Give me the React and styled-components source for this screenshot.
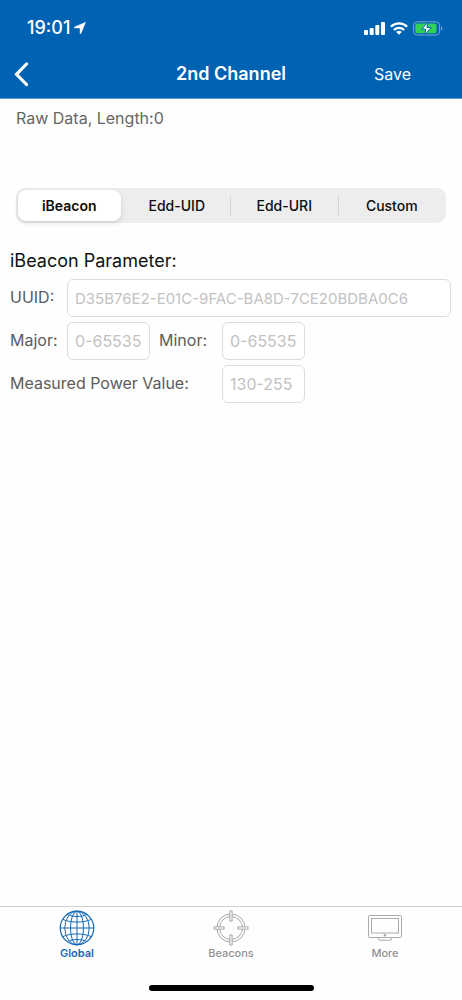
import React, { useState } from "react";
import styled, { createGlobalStyle } from "styled-components";

const GlobalStyle = createGlobalStyle`
  * { box-sizing: border-box; }
  body { margin: 0; background: #fff; font-family: Inter, "Liberation Sans", sans-serif; }
  button, input { font: inherit; }
`;

const Screen = styled.div`
  display: flex;
  flex-direction: column;
  min-height: 100vh;
  background: #fefefe;
`;

const Header = styled.header`
  background: #0062b2;
  color: #fff;
  border-bottom: 1px solid #5c9bd0;
`;

const StatusBar = styled.div`
  display: flex;
  align-items: center;
  justify-content: space-between;
  height: 52px;
  padding: 4px 19px 0 27px;
`;

const Clock = styled.div`
  display: flex;
  align-items: center;
  gap: 4px;
  font-size: 18px;
  line-height: 24px;
  font-weight: 500;
`;

const StatusIcons = styled.div`
  display: flex;
  align-items: center;
  gap: 5px;
`;

const NavBar = styled.div`
  display: grid;
  grid-template-columns: 1fr auto 1fr;
  align-items: center;
  height: 46px;
  padding: 0 14px 2px;
`;

const NavSide = styled.div`
  display: flex;
  justify-content: ${(p) => (p.$end ? "flex-end" : "flex-start")};
  padding-right: ${(p) => (p.$end ? "37px" : "0")};
`;

const Title = styled.h1`
  margin: 0;
  font-size: 18px;
  line-height: 24px;
  font-weight: 600;
`;

const NavButton = styled.button`
  display: flex;
  align-items: center;
  border: 0;
  padding: 0;
  background: none;
  color: inherit;
  font-size: 16px;
  line-height: 24px;
`;

const Main = styled.main`
  flex: 1;
  padding-top: 7px;
`;

const RawData = styled.p`
  margin: 0 16px 58px;
  color: #666;
  font-size: 16px;
  line-height: 24px;
`;

const Segments = styled.fieldset`
  display: flex;
  gap: 5px;
  height: 35px;
  min-width: 0;
  margin: 0 16px;
  padding: 2px 3px 2px 2px;
  border: 0;
  border-radius: 9px;
  background: #ededee;
`;

const Segment = styled.label`
  position: relative;
  display: flex;
  flex: 1;
  align-items: center;
  justify-content: center;
  border-radius: 8px;
  font-size: 14px;
  line-height: 20px;
  font-weight: ${(p) => (p.$active ? 600 : 500)};
  color: #0c0c0c;
  background: ${(p) => (p.$active ? "#fff" : "transparent")};
  box-shadow: ${(p) => (p.$active ? "0 2px 5px rgba(0, 0, 0, 0.14)" : "none")};
  cursor: pointer;

  &::before {
    content: "";
    position: absolute;
    left: -3px;
    top: 6px;
    bottom: 6px;
    width: 1px;
    background: ${(p) => (p.$divider ? "#d2d2d4" : "transparent")};
  }
`;

const HiddenRadio = styled.input`
  position: absolute;
  inset: 0;
  margin: 0;
  opacity: 0;
`;

const Form = styled.form`
  padding: 25px 11px 0 10px;
`;

const SectionTitle = styled.h2`
  margin: 0 0 5px;
  font-size: 18px;
  line-height: 26px;
  font-weight: 400;
  color: #111;
`;

const Fields = styled.div`
  display: grid;
  grid-template-columns: 57px 83px 72px 83px 1fr;
  grid-auto-rows: 38px;
  row-gap: 5px;
`;

const FieldLabel = styled.label`
  grid-column: ${(p) => p.$column};
  align-self: center;
  padding-bottom: 3px;
  padding-left: ${(p) => (p.$inset ? "9px" : "0")};
  font-size: 16px;
  line-height: 24px;
  white-space: nowrap;
  color: #5c5c5c;
`;

const Field = styled.input`
  grid-column: ${(p) => p.$column};
  width: 100%;
  min-width: 0;
  padding: 0 4px 0 7px;
  border: 1px solid #dcdcdc;
  border-radius: 6px;
  background: #fff;
  color: #333;
  font-size: ${(p) => (p.$long ? "15px" : "16px")};
  outline-color: #0062b2;

  &::placeholder { color: #c2c2c2; opacity: 1; }
`;

const TabBar = styled.nav`
  display: flex;
  height: 79px;
  border-top: 1px solid #d0d0d0;
`;

const Tab = styled.a`
  display: flex;
  flex: 1;
  flex-direction: column;
  align-items: center;
  padding-top: 3px;
  font-size: 11px;
  line-height: 14px;
  font-weight: ${(p) => (p.$active ? 600 : 500)};
  color: ${(p) => (p.$active ? "#1668b5" : "#929292")};
  text-decoration: none;
`;

const HomeIndicator = styled.div`
  width: 165px;
  height: 6px;
  margin: 0 auto 9px;
  border-radius: 3px;
  background: #000;
`;

const LocationArrow = () => (
  <svg width="12" height="12" viewBox="0 0 12 12" aria-hidden="true">
    <path d="M11.6.3 6.9 11.6c-.2.5-.9.4-.9-.1V6H.6C0 6-.1 5.300.4 5.100z" fill="#fff" stroke="#fff" strokeWidth=".4" strokeLinejoin="round" />
  </svg>
);

const BackIcon = () => (
  <svg width="15" height="25" viewBox="0 0 15 25" fill="none" aria-hidden="true">
    <path d="M12.5 2 2.5 12.300l10 10.200" stroke="#fff" strokeWidth="3.2" strokeLinecap="round" strokeLinejoin="miter" />
  </svg>
);

const SignalIcon = () => (
  <svg width="21" height="13" viewBox="0 0 21 13" fill="#fff" aria-hidden="true">
    <rect x="0" y="8" width="4" height="5" rx="1" />
    <rect x="5.7" y="6" width="4" height="7" rx="1" />
    <rect x="11.3" y="3" width="4" height="10" rx="1" />
    <rect x="17" y="0" width="4" height="13" rx="1" />
  </svg>
);

const WifiIcon = () => (
  <svg width="18" height="13" viewBox="0 0 18 13" fill="none" stroke="#fff" strokeWidth="2.3" aria-hidden="true">
    <path d="M.9 4.7a11.6 11.6 0 0 1 16.2 0M3.9 8a7.4 7.4 0 0 1 10.2 0" />
    <path d="M9 12.8 6.2 10a4 4 0 0 1 5.6 0z" fill="#fff" stroke="none" />
  </svg>
);

const BatteryIcon = () => (
  <svg width="30" height="15" viewBox="0 0 30 15" aria-hidden="true">
    <rect x=".6" y=".8" width="26" height="13.2" rx="3.8" fill="none" stroke="#78abd5" />
    <rect x="2.3" y="2.5" width="21.2" height="9.8" rx="2.2" fill="#32d158" />
    <path d="M28 5.2c1.8.8 1.8 3.6 0 4.4z" fill="#78abd5" />
    <path d="m15.2.8-6.4 7.4h4.1l-1.4 6 6.7-7.8h-4.3z" fill="#fff" stroke="#0062b2" strokeWidth="1" />
  </svg>
);

const GlobeIcon = () => (
  <svg width="36" height="36" viewBox="0 0 36 36" fill="none" stroke="currentColor" aria-hidden="true">
    <circle cx="18" cy="18" r="16.8" strokeWidth="1.2" />
    <ellipse cx="18" cy="18" rx="12.2" ry="16.8" />
    <ellipse cx="18" cy="18" rx="6.5" ry="16.8" />
    <path d="M18 1.2v33.6M1.2 18h33.6M3.6 9.3C11 13 25 13 32.4 9.3M3.6 26.7C11 23 25 23 32.4 26.7M8.2 4.5c6 2.7 13.6 2.7 19.6 0M8.2 31.5c6-2.7 13.6-2.7 19.6 0" />
  </svg>
);

const TargetIcon = () => (
  <svg width="36" height="36" viewBox="0 0 36 36" fill="none" stroke="#a8a8a8" aria-hidden="true">
    <circle cx="18" cy="18" r="14.1" />
    <circle cx="18" cy="18" r="11.5" />
    <g fill="#fefefe">
      <rect x="16.9" y="1" width="2.2" height="10" />
      <rect x="16.9" y="25" width="2.2" height="10" />
      <rect x="1" y="16.9" width="10" height="2.2" />
      <rect x="25" y="16.9" width="10" height="2.2" />
    </g>
  </svg>
);

const MonitorIcon = () => (
  <svg width="36" height="36" viewBox="0 0 36 36" fill="none" stroke="#aaa" aria-hidden="true">
    <rect x="1.5" y="5.5" width="33" height="22" rx="1.2" />
    <rect x="4.5" y="8.5" width="27" height="14.500" />
    <circle cx="18" cy="25.200" r=".9" fill="#a0a0a0" />
    <path d="M11.500 27.700v1.200c0 .9.5 1.300 1.300 1.300h10.400c.8 0 1.300-.4 1.300-1.300v-1.200" />
  </svg>
);

const formats = ["iBeacon", "Edd-UID", "Edd-URI", "Custom"];

const tabs = [
  { name: "Global", Icon: GlobeIcon },
  { name: "Beacons", Icon: TargetIcon },
  { name: "More", Icon: MonitorIcon },
];

export default function App() {
  const [format, setFormat] = useState(0);
  const [tab, setTab] = useState("Global");

  return (
    <Screen>
      <GlobalStyle />
      <Header>
        <StatusBar>
          <Clock>19:01<LocationArrow /></Clock>
          <StatusIcons><SignalIcon /><WifiIcon /><BatteryIcon /></StatusIcons>
        </StatusBar>
        <NavBar>
          <NavSide>
            <NavButton type="button" aria-label="Back"><BackIcon /></NavButton>
          </NavSide>
          <Title>2nd Channel</Title>
          <NavSide $end>
            <NavButton type="submit" form="beacon-form">Save</NavButton>
          </NavSide>
        </NavBar>
      </Header>

      <Main>
        <RawData>Raw Data, Length:0</RawData>
        <Segments aria-label="Format">
          {formats.map((name, i) => (
            <Segment key={name} $active={i === format} $divider={i > 0 && i !== format && i !== format + 1}>
              <HiddenRadio type="radio" name="format" checked={i === format} onChange={() => setFormat(i)} />
              {name}
            </Segment>
          ))}
        </Segments>

        <Form id="beacon-form" onSubmit={(e) => e.preventDefault()}>
          <SectionTitle>iBeacon Parameter:</SectionTitle>
          <Fields>
            <FieldLabel htmlFor="uuid" $column="1">UUID:</FieldLabel>
            <Field id="uuid" $column="2 / -1" $long placeholder="D35B76E2-E01C-9FAC-BA8D-7CE20BDBA0C6" />
            <FieldLabel htmlFor="major" $column="1">Major:</FieldLabel>
            <Field id="major" $column="2" inputMode="numeric" placeholder="0-65535" />
            <FieldLabel htmlFor="minor" $column="3" $inset>Minor:</FieldLabel>
            <Field id="minor" $column="4" inputMode="numeric" placeholder="0-65535" />
            <FieldLabel htmlFor="power" $column="1 / 4">Measured Power Value:</FieldLabel>
            <Field id="power" $column="4" inputMode="numeric" placeholder="130-255" />
          </Fields>
        </Form>
      </Main>

      <TabBar>
        {tabs.map(({ name, Icon }) => (
          <Tab key={name} href={`#${name.toLowerCase()}`} $active={name === tab} onClick={() => setTab(name)}>
            <Icon />
            {name}
          </Tab>
        ))}
      </TabBar>
      <HomeIndicator />
    </Screen>
  );
}
